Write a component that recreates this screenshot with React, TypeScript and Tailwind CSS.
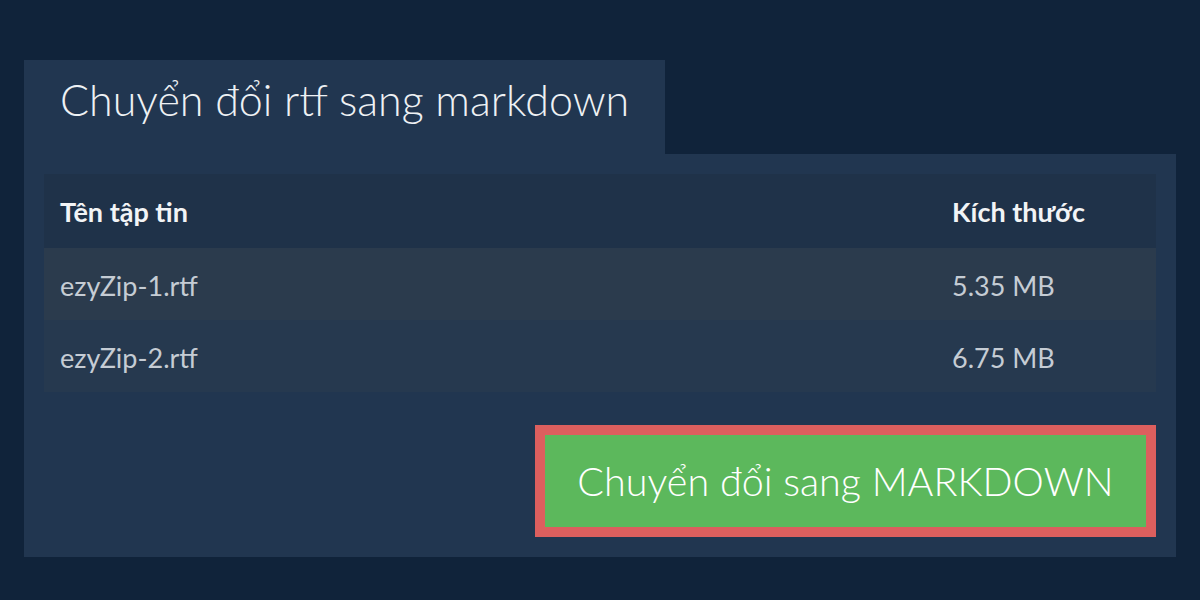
import React from "react";

export default function App() {
  const rows = [
    { name: "ezyZip-1.rtf", size: "5.35 MB", bg: "bg-[#2b3b4d]" },
    { name: "ezyZip-2.rtf", size: "6.75 MB", bg: "bg-[#26394f]" },
  ];
  return (
    <div
      className="w-[1200px] h-[600px] bg-[#10233a] pt-[60px] px-6"
      style={{ fontFamily: "Lato, 'Noto Sans', sans-serif" }}
    >
      <div className="flex">
        <div className="bg-[#213650] h-[94px] px-9 pt-[18px]">
          <h1 className="text-[43px] font-light text-[#eef1f4] leading-none">
            Chuyển đổi rtf sang markdown
          </h1>
        </div>
      </div>
      <div className="bg-[#213650] p-5 flex flex-col">
        <div className="flex flex-col">
          <div className="grid grid-cols-[1fr_188px] h-[74px] pt-[2px] items-center bg-[#1f3249] px-4 text-[27px] font-bold text-[#f2f4f6]">
            <div>Tên tập tin</div>
            <div>Kích thước</div>
          </div>
          {rows.map((r) => (
            <div
              key={r.name}
              className={`grid grid-cols-[1fr_188px] h-[72px] pt-[4px] items-center px-4 text-[27px] text-[#c5ccd4] ${r.bg}`}
            >
              <div>{r.name}</div>
              <div>{r.size}</div>
            </div>
          ))}
        </div>
        <div className="flex justify-end mt-[33px]">
          <button className="w-[621px] h-[112px] border-[10px] border-[#dc5f5e] bg-[#5cb85c] text-white text-[39.5px] font-light leading-none flex items-center justify-center">
            Chuyển đổi sang MARKDOWN
          </button>
        </div>
      </div>
    </div>
  );
}
